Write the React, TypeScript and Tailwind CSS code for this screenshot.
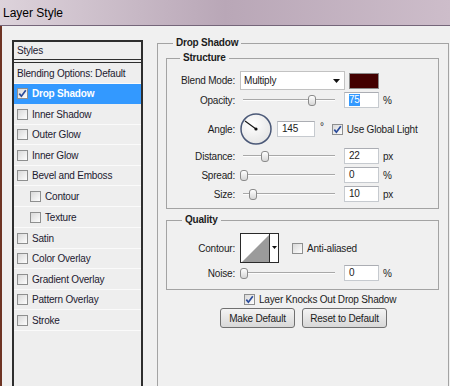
import React from "react";

function Check({ checked }: { checked?: boolean }) {
  return (
    <span className="flex h-[11px] w-[11px] shrink-0 items-center justify-center border border-[#8e8f8f] bg-gradient-to-br from-[#d9d9d9] to-[#fdfdfd]">
      {checked && (
        <svg width="9" height="9" viewBox="0 0 9 9" className="block">
          <path d="M1.3 4.6 L3.4 7.2 L7.8 1.2" fill="none" stroke="#2b4c9b" strokeWidth="1.7" />
        </svg>
      )}
    </span>
  );
}

function Slider({ pos }: { pos: number }) {
  return (
    <div className="relative h-[16px] w-[98px] shrink-0">
      <div className="absolute left-[3px] right-[3px] top-[7px] h-[2px] border-t border-b border-t-[#a8a8a8] border-b-[#fdfdfd]" />
      <div
        className="absolute top-[3px] h-[11px] w-[8px] rounded-[3px] border border-[#8b8b8b] bg-gradient-to-b from-white to-[#d6d6d6]"
        style={{ left: pos }}
      />
    </div>
  );
}

function Field({ value, selected, w = 35 }: { value: string; selected?: boolean; w?: number }) {
  return (
    <div
      className="flex h-[16px] shrink-0 items-center border border-[#c6cacf] border-t-[#abadb3] bg-white pl-[4px] leading-[12px]"
      style={{ width: w }}
    >
      {selected ? <span className="bg-[#3399ff] text-white">{value}</span> : value}
    </div>
  );
}

function Label({ text }: { text: string }) {
  return <div className="mr-[5px] w-[68px] shrink-0 text-right">{text}</div>;
}

function SliderRow({ label, pos, value, unit, selected }: { label: string; pos: number; value: string; unit: string; selected?: boolean }) {
  return (
    <div className="mt-[3px] flex h-[16px] items-center">
      <Label text={label} />
      <Slider pos={pos} />
      <div className="ml-[6px]">
        <Field value={value} selected={selected} />
      </div>
      <div className="ml-[4px]">{unit}</div>
    </div>
  );
}

function GroupTitle({ text, ml }: { text: string; ml: string }) {
  return (
    <div className={`-mt-[7px] w-fit bg-[#f0f0f0] px-[3px] font-bold leading-[12px] ${ml}`}>{text}</div>
  );
}

const rows: { label: string; h: number; indent?: boolean; selected?: boolean }[] = [
  { label: "Drop Shadow", h: 20, selected: true },
  { label: "Inner Shadow", h: 21 },
  { label: "Outer Glow", h: 20 },
  { label: "Inner Glow", h: 21 },
  { label: "Bevel and Emboss", h: 20 },
  { label: "Contour", h: 21, indent: true },
  { label: "Texture", h: 21, indent: true },
  { label: "Satin", h: 21 },
  { label: "Color Overlay", h: 20 },
  { label: "Gradient Overlay", h: 21 },
  { label: "Pattern Overlay", h: 20 },
  { label: "Stroke", h: 21 },
];

export default function App() {
  return (
    <div className="h-[386px] w-[450px] overflow-hidden bg-[#f0f0f0] text-[10px] tracking-[-0.2px] text-[#1c2030] [font-family:'Liberation_Sans',Arial,sans-serif]">
      {/* Title bar */}
      <div className="flex h-[26px] items-center border-b border-[#75667a] bg-gradient-to-r from-[#ddd3db] via-[#b9a7b7] to-[#cdbdca] pl-[3px] text-[12px] tracking-normal text-black">
        Layer Style
      </div>

      {/* Body */}
      <div className="flex h-[360px] items-start border-l-2 border-[#6e3424] pl-[10px] pt-[14px]">
        {/* Styles list */}
        <div className="h-[400px] w-[131px] shrink-0 border-2 border-[#2e2e2e] bg-[#eeeeee]">
          <div className="flex h-[18px] items-center border-b border-[#2e2e2e] pl-[3px]">Styles</div>
          <div className="h-[3px] border-b border-[#2e2e2e]" />
          <div className="flex h-[21px] items-center border-b border-[#fafafa] pl-[3px]">Blending Options: Default</div>
          {rows.map((r) => (
            <div
              key={r.label}
              className={`flex items-center gap-[4px] border-b ${
                r.selected ? "border-[#3399ff] bg-[#3399ff] font-bold text-white" : "border-[#fafafa]"
              } ${r.indent ? "pl-[16px]" : "pl-[3px]"}`}
              style={{ height: r.h }}
            >
              <Check checked={r.selected} />
              <span>{r.label}</span>
            </div>
          ))}
        </div>

        {/* Drop Shadow group */}
        <div className="ml-[14px] mt-[3px] h-[400px] w-[292px] shrink-0 border border-[#a3a3a3] text-[#1c1c1c]">
          <GroupTitle text="Drop Shadow" ml="ml-[15px]" />

          {/* Structure */}
          <div className="ml-[8px] mr-[9px] mt-[9px] border border-[#a3a3a3] pb-[6px]">
            <GroupTitle text="Structure" ml="ml-[13px]" />

            <div className="mt-[7px] flex h-[19px] items-center">
              <Label text="Blend Mode:" />
              <div className="flex h-[19px] w-[105px] shrink-0 items-center justify-between border border-[#c2c2c2] bg-white pl-[3px] pr-[4px]">
                <span>Multiply</span>
                <svg width="7" height="4" viewBox="0 0 7 4" className="block">
                  <polygon points="0,0 7,0 3.5,4" fill="#111" />
                </svg>
              </div>
              <div className="ml-[4px] h-[16px] w-[30px] shrink-0 border border-[#8a8a8a] bg-[#430000]" />
            </div>

            <div className="mt-[2px] flex h-[16px] items-center">
              <Label text="Opacity:" />
              <Slider pos={68} />
              <div className="ml-[6px]">
                <Field value="75" selected />
              </div>
              <div className="ml-[4px]">%</div>
            </div>

            <div className="mt-[5px] flex h-[32px] items-center">
              <Label text="Angle:" />
              <svg width="32" height="32" viewBox="0 0 32 32" className="block shrink-0">
                <defs>
                  <radialGradient id="dialg" cx="0.4" cy="0.35" r="0.7">
                    <stop offset="0" stopColor="#ffffff" />
                    <stop offset="1" stopColor="#e4e4e4" />
                  </radialGradient>
                </defs>
                <circle cx="16" cy="16" r="15" fill="url(#dialg)" stroke="#4a5877" strokeWidth="1.5" />
                <line x1="16" y1="16" x2="5" y2="8" stroke="#111" strokeWidth="1.1" />
                <circle cx="16" cy="16" r="1.6" fill="#111" />
              </svg>
              <div className="ml-[5px]">
                <Field value="145" w={38} />
              </div>
              <div className="mb-[6px] ml-[5px]">°</div>
              <div className="ml-[8px]">
                <Check checked />
              </div>
              <div className="ml-[4px]">Use Global Light</div>
            </div>

            <SliderRow label="Distance:" pos={21} value="22" unit="px" />
            <SliderRow label="Spread:" pos={0} value="0" unit="%" />
            <SliderRow label="Size:" pos={9} value="10" unit="px" />
          </div>

          {/* Quality */}
          <div className="ml-[8px] mr-[9px] mt-[11px] border border-[#a3a3a3] pb-[8px]">
            <GroupTitle text="Quality" ml="ml-[15px]" />

            <div className="mt-[7px] flex h-[30px] items-center">
              <Label text="Contour:" />
              <div className="flex h-[30px] w-[39px] shrink-0 border border-[#2a2a2a] bg-white">
                <svg width="28" height="28" viewBox="0 0 28 28" className="block">
                  <rect x="0" y="0" width="28" height="28" fill="#ffffff" />
                  <polygon points="1,28 28,1 28,28" fill="#9b9b9b" />
                </svg>
                <div className="flex flex-1 items-center justify-center border-l border-[#2a2a2a] bg-white pb-[2px]">
                  <svg width="5" height="3" viewBox="0 0 5 3" className="block">
                    <polygon points="0,0 5,0 2.5,3" fill="#111" />
                  </svg>
                </div>
              </div>
              <div className="ml-[13px]">
                <Check />
              </div>
              <div className="ml-[4px]">Anti-aliased</div>
            </div>

            <div className="mt-[2px] flex h-[16px] items-center">
              <Label text="Noise:" />
              <Slider pos={0} />
              <div className="ml-[6px]">
                <Field value="0" />
              </div>
              <div className="ml-[4px]">%</div>
            </div>
          </div>

          <div className="ml-[86px] mt-[4px] flex h-[11px] items-center">
            <Check checked />
            <div className="ml-[4px]">Layer Knocks Out Drop Shadow</div>
          </div>

          <div className="ml-[62px] mt-[3px] flex gap-[7px]">
            <button className="h-[20px] w-[75px] rounded-[3px] border border-[#707070] bg-gradient-to-b from-[#f4f4f4] to-[#d8d8d8] text-[#1c1c1c]">
              Make Default
            </button>
            <button className="h-[20px] w-[85px] rounded-[3px] border border-[#707070] bg-gradient-to-b from-[#f4f4f4] to-[#d8d8d8] text-[#1c1c1c]">
              Reset to Default
            </button>
          </div>
        </div>
      </div>
    </div>
  );
}
